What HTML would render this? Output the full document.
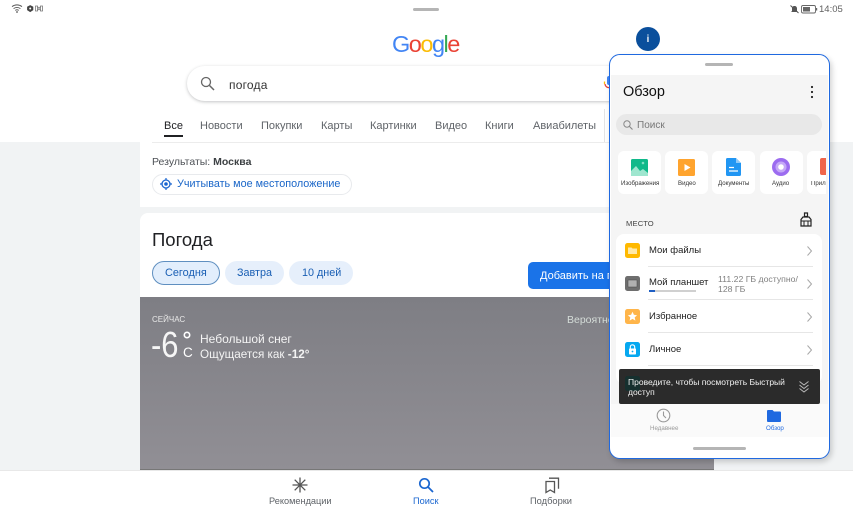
<!DOCTYPE html>
<html><head><meta charset="utf-8">
<style>
html,body{margin:0;padding:0;background:#fff}
#r{position:relative;width:853px;height:512px;overflow:hidden;background:#fff;font-family:"Liberation Sans",sans-serif;color:#3c4043}
.a{position:absolute}
.t{position:absolute;white-space:nowrap;line-height:1}
svg{position:absolute;overflow:visible}
.tile{position:absolute;top:151px;width:43px;height:43px;background:#fff;border-radius:6px}
.lbl{position:absolute;top:181px;font-size:6.1px;color:#333;white-space:nowrap;line-height:1}
.chev{fill:none;stroke:#a8a8a8;stroke-width:1}
.sep{position:absolute;left:648px;width:165px;height:1px;background:#e6e6e6}
.it{position:absolute;left:649px;font-size:9.5px;color:#222;line-height:1;white-space:nowrap}
.tab{position:absolute;top:120.5px;font-size:11px;color:#5f6368;line-height:1;white-space:nowrap}
</style></head><body><div id="r">

<div class="a" style="left:0;top:142px;width:853px;height:328px;background:#f1f3f4"></div>
<div class="a" style="left:140px;top:142px;width:574px;height:65px;background:#fff"></div>
<div class="a" style="left:140px;top:213px;width:574px;height:257px;background:#fff;border-radius:8px 8px 0 0"></div>

<!-- status bar -->
<svg style="left:12px;top:4px" width="34" height="10" viewBox="0 0 34 10">
<path d="M0 2.600C3 .3 7 .3 10 2.600M1.600 4.600C3.600 3 6.400 3 8.400 4.600M3.200 6.400C4.300 5.600 5.700 5.600 6.800 6.400" fill="none" stroke="#555" stroke-width=".9"/><circle cx="5" cy="8" r=".9" fill="#555"/>
<path d="M16 2.200l2.200-1.100 2.200 1.100.9.5v3.400l-3.100 2-3.100-2V2.700z" fill="#444"/><circle cx="18.200" cy="4.500" r="1" fill="#fff"/>
<path d="M23.500 2h2v5h-2zM30.500 2h-2v5h2zM25.500 2.500l3 4M28.500 2.500l-3 4" fill="none" stroke="#777" stroke-width=".8"/>
</svg>
<div class="a" style="left:413px;top:8px;width:26px;height:3px;border-radius:2px;background:#b5b5b5"></div>
<svg style="left:789px;top:4px" width="28" height="11" viewBox="0 0 28 11">
<path d="M2 8l1-1V4.500C3 3 4 2 5.500 2S8 3 8 4.500V7l1 1z" fill="#555"/><path d="M1.500 1.500l8 7.500" stroke="#555" stroke-width="1"/>
<rect x="12.500" y="1.500" width="14" height="7.500" rx="1.500" fill="none" stroke="#666" stroke-width=".9"/><rect x="14" y="3" width="7" height="4.500" fill="#666"/><rect x="27" y="4" width="1.200" height="2.500" fill="#666"/>
</svg>
<div class="t" style="left:819px;top:4.500px;font-size:9.500px;color:#5f5f5f">14:05</div>

<!-- Google logo -->
<div class="t" style="left:392px;top:33px;font-size:23.500px;letter-spacing:-1.500px;font-weight:400"><span style="color:#4285f4">G</span><span style="color:#ea4335">o</span><span style="color:#fbbc05">o</span><span style="color:#4285f4">g</span><span style="color:#34a853">l</span><span style="color:#ea4335">e</span></div>

<!-- search -->
<div class="a" style="left:187px;top:66px;width:480px;height:35px;border-radius:18px;background:#fff;box-shadow:0 1px 3px rgba(60,64,67,.3)"></div>
<svg style="left:200px;top:76px" width="16" height="16" viewBox="0 0 16 16"><circle cx="6" cy="6" r="4.500" fill="none" stroke="#666" stroke-width="1.300"/><path d="M9.500 9.500l4.500 4.500" stroke="#666" stroke-width="1.500"/></svg>
<div class="t" style="left:229px;top:78.500px;font-size:12px;letter-spacing:.2px;color:#333">погода</div>

<!-- tabs -->
<div class="tab" style="left:164px;color:#202124">Все</div>
<div class="a" style="left:164px;top:135px;width:19px;height:1.500px;background:#202124"></div>
<div class="tab" style="left:200px">Новости</div>
<div class="tab" style="left:261px">Покупки</div>
<div class="tab" style="left:321px">Карты</div>
<div class="tab" style="left:370px">Картинки</div>
<div class="tab" style="left:435px">Видео</div>
<div class="tab" style="left:485px">Книги</div>
<div class="tab" style="left:533px">Авиабилеты</div>
<div class="a" style="left:604px;top:109px;width:1px;height:33px;background:#e3e3e3"></div>
<div class="a" style="left:152px;top:142px;width:460px;height:1px;background:#ececec"></div>

<div class="t" style="left:152px;top:157px;font-size:10.500px;color:#4d5156">Результаты: <b style="color:#3c4043">Москва</b></div>
<div class="a" style="left:152px;top:174px;width:198px;height:19px;border:1px solid #e8eaed;border-radius:11px"></div>
<svg style="left:159px;top:177px" width="14" height="14" viewBox="0 0 14 14"><circle cx="7" cy="7" r="4" fill="none" stroke="#1a66d0" stroke-width="1.300"/><circle cx="7" cy="7" r="1.800" fill="#1a66d0"/><path d="M7 1v2M7 11v2M1 7h2M11 7h2" stroke="#1a66d0" stroke-width="1.200"/></svg>
<div class="t" style="left:177px;top:179px;font-size:10.800px;color:#1a66c8">Учитывать мое местоположение</div>

<div class="t" style="left:152px;top:231px;font-size:18.500px;color:#202124">Погода</div>
<div class="a" style="left:152px;top:261px;width:66px;height:22px;border:1px solid #5f8fc0;border-radius:12px;background:#e2eefc"></div>
<div class="t" style="left:165px;top:268px;font-size:10.900px;color:#1a5fb4">Сегодня</div>
<div class="a" style="left:225px;top:261px;width:59px;height:24px;border-radius:12px;background:#e6effb"></div>
<div class="t" style="left:237px;top:268px;font-size:10.800px;color:#1a5fb4">Завтра</div>
<div class="a" style="left:289px;top:261px;width:64px;height:24px;border-radius:12px;background:#e6effb"></div>
<div class="t" style="left:302px;top:268px;font-size:10.800px;color:#1a5fb4">10 дней</div>
<div class="a" style="left:528px;top:262px;width:90px;height:27px;border-radius:5px;background:#1a73e8"></div>
<div class="t" style="left:540px;top:270.500px;font-size:11px;color:#fff;width:70px;overflow:hidden">Добавить на главный</div>

<!-- weather -->
<div class="a" style="left:140px;top:297px;width:574px;height:173px;background:linear-gradient(#7e7e84,#918f95)"></div>
<div class="t" style="left:152px;top:315.500px;font-size:8px;color:#e8e8e8">СЕЙЧАС</div>
<div class="t" style="left:567px;top:314.500px;font-size:10.500px;color:#d4dcd8">Вероятность</div>
<div class="t" style="left:151px;top:327px;font-size:36px;color:#f6f6f6;transform:scaleX(.86);transform-origin:0 0">-6</div>
<svg style="left:183px;top:331px" width="9" height="9" viewBox="0 0 9 9"><circle cx="4" cy="4" r="2.700" fill="none" stroke="#fff" stroke-width="1.600"/></svg>
<div class="t" style="left:183px;top:346px;font-size:13.500px;color:#fff">C</div>
<div class="t" style="left:200px;top:333px;font-size:12px;color:#f4f4f4">Небольшой снег</div>
<div class="t" style="left:200px;top:349px;font-size:11.700px;color:#f4f4f4">Ощущается как <b style="font-weight:700">-12°</b></div>

<!-- bottom nav -->
<div class="a" style="left:0;top:470px;width:853px;height:42px;background:#fff;border-top:1px solid #e8e8e8;box-sizing:border-box"></div>
<div class="a" style="left:140px;top:469px;width:574px;height:1px;background:#777"></div>
<svg style="left:292px;top:477px" width="16" height="16" viewBox="0 0 16 16"><path d="M8 .5v15M.5 8h15M2.700 2.700l10.600 10.600M13.300 2.700L2.700 13.300" stroke="#555" stroke-width="1.300"/></svg>
<div class="t" style="left:269px;top:496.500px;font-size:9.200px;color:#5f6368">Рекомендации</div>
<svg style="left:418px;top:477px" width="16" height="16" viewBox="0 0 16 16"><circle cx="6.500" cy="6.500" r="4.700" fill="none" stroke="#1a66d0" stroke-width="1.700"/><path d="M10 10l5 5" stroke="#1a66d0" stroke-width="1.800"/></svg>
<div class="t" style="left:413px;top:496.500px;font-size:9.200px;color:#1a66d0">Поиск</div>
<svg style="left:545px;top:477px" width="15" height="16" viewBox="0 0 15 16"><path d="M1 4.500h8.500v11L5.250 13 1 15.500z" fill="none" stroke="#555" stroke-width="1.300"/><path d="M4 1.200h9.500v10.500" fill="none" stroke="#555" stroke-width="1.300"/></svg>
<div class="t" style="left:530px;top:496.500px;font-size:9.300px;color:#5f6368">Подборки</div>

<!-- floating info -->
<div class="a" style="left:636px;top:27px;width:24px;height:24px;border-radius:50%;background:#0a4f9c"></div>
<div class="t" style="left:646.500px;top:34px;font-size:10.500px;font-weight:700;color:#dfe8f2">i</div>

<!-- google mic peek -->
<svg style="left:603px;top:75px" width="8" height="16" viewBox="0 0 8 16"><path d="M2 9a4 4 0 0 0 5 3.500" fill="none" stroke="#ea4335" stroke-width="1.300"/><path d="M1.500 6.500V9" fill="none" stroke="#fbbc05" stroke-width="1.300"/><rect x="4" y="1" width="4" height="9" rx="2" fill="#4285f4"/></svg>

<!-- panel -->
<div class="a" style="left:609px;top:54px;width:221px;height:405px;box-sizing:border-box;border:1.500px solid #1f69e0;border-radius:11px;background:#fff;box-shadow:2px 3px 6px rgba(0,0,0,.18)"></div>
<div class="a" style="left:611px;top:75px;width:217px;height:362px;background:#f5f5f5"></div>
<div class="a" style="left:611px;top:404px;width:217px;height:33px;background:#fafafa"></div>
<div class="a" style="left:705px;top:63px;width:28px;height:3px;border-radius:2px;background:#b5b5b5"></div>
<div class="t" style="left:623px;top:85px;font-size:14.500px;color:#111">Обзор</div>
<svg style="left:810px;top:84.500px" width="4" height="14" viewBox="0 0 4 14"><circle cx="2" cy="2" r="1.100" fill="#222"/><circle cx="2" cy="7" r="1.100" fill="#222"/><circle cx="2" cy="12" r="1.100" fill="#222"/></svg>

<div class="a" style="left:616px;top:114px;width:206px;height:21px;border-radius:11px;background:#e8e8e8"></div>
<svg style="left:623px;top:120px" width="10" height="10" viewBox="0 0 10 10"><circle cx="4" cy="4" r="3.200" fill="none" stroke="#888" stroke-width="1"/><path d="M6.400 6.400L9.500 9.500" stroke="#888" stroke-width="1.100"/></svg>
<div class="t" style="left:637px;top:120.500px;font-size:10px;color:#777">Поиск</div>

<!-- tiles -->
<div class="tile" style="left:618px"></div>
<div class="tile" style="left:665px"></div>
<div class="tile" style="left:712px"></div>
<div class="tile" style="left:760px"></div>
<div class="a" style="left:807px;top:151px;width:18.500px;height:43px;background:#fff;border-radius:6px 0 0 6px"></div>
<svg style="left:631px;top:159px" width="17" height="17" viewBox="0 0 17 17"><rect width="17" height="17" rx="1.500" fill="#10b98a"/><path d="M0 17V12L5 7l4 5 3-2 5 4v3z" fill="#9fe6cf"/><circle cx="12" cy="4" r="1.300" fill="#7fe0c4"/></svg>
<svg style="left:678px;top:159px" width="17" height="17" viewBox="0 0 17 17"><rect width="17" height="17" rx="1.500" fill="#ffa42e"/><path d="M6.500 5l6 3.500-6 3.500z" fill="#fff"/></svg>
<svg style="left:726px;top:158px" width="15" height="18" viewBox="0 0 15 18"><path d="M1.500 0H10l5 5v11.500A1.500 1.500 0 0 1 13.500 18h-12A1.500 1.500 0 0 1 0 16.500v-15A1.500 1.500 0 0 1 1.500 0z" fill="#2196f3"/><path d="M10 0l5 5h-5z" fill="#90caf9"/><path d="M3 9.500h5M3 13h9" stroke="#fff" stroke-width="1.200"/></svg>
<svg style="left:772px;top:158px" width="18" height="18" viewBox="0 0 18 18"><circle cx="9" cy="9" r="9" fill="#9c6cf0"/><circle cx="9" cy="9" r="5.500" fill="#c5a8f7"/><circle cx="9" cy="9" r="2.800" fill="#fff"/></svg>
<div class="a" style="left:820px;top:158px;width:5.500px;height:17px;background:#f0654a;border-radius:2px 0 0 2px"></div>
<div class="lbl" style="left:621px">Изображения</div>
<div class="lbl" style="left:678px">Видео</div>
<div class="lbl" style="left:718px">Документы</div>
<div class="lbl" style="left:772px">Аудио</div>
<div class="a" style="left:811px;top:181px;width:14.500px;overflow:hidden;font-size:6.100px;color:#333;line-height:1;white-space:nowrap">Прил</div>

<div class="t" style="left:626px;top:219.500px;font-size:7.600px;color:#444;letter-spacing:.2px">МЕСТО</div>
<svg style="left:800px;top:212px" width="12" height="15" viewBox="0 0 12 15"><path d="M4.500 1h3v3.500h-3zM3 5h6l2 2.500V14H1V7.500z" fill="none" stroke="#222" stroke-width="1.200"/><path d="M1 9h10M4 9v5M8 9v5" stroke="#222" stroke-width="1"/></svg>

<!-- list -->
<div class="a" style="left:616px;top:234px;width:206px;height:150px;background:#fff;border-radius:8px"></div>
<svg style="left:625px;top:243px" width="15" height="15" viewBox="0 0 15 15"><rect width="15" height="15" rx="2.500" fill="#ffb900"/><path d="M3 4.500h3.500l1 1H12V11H3z" fill="#ffe9a8"/></svg>
<div class="it" style="top:246px">Мои файлы</div>
<svg style="left:807px;top:245.500px" width="5" height="10" viewBox="0 0 5 10"><path class="chev" d="M.5.500l4 4.500-4 4.500"/></svg>
<div class="sep" style="top:266px"></div>
<svg style="left:625px;top:276px" width="15" height="15" viewBox="0 0 15 15"><rect width="15" height="15" rx="2.500" fill="#6e6e6e"/><rect x="3" y="4" width="9" height="7" rx=".5" fill="#b0b0b0" stroke="#444" stroke-width=".5"/></svg>
<div class="it" style="top:277.500px">Мой планшет</div>
<div class="a" style="left:649px;top:290px;width:47px;height:1.500px;background:#d0d0d0"></div>
<div class="a" style="left:649px;top:290px;width:6px;height:1.500px;background:#1f5fc4"></div>
<div class="t" style="left:718px;top:275px;font-size:8.700px;color:#808080">111.22 ГБ доступно/</div>
<div class="t" style="left:718px;top:284.500px;font-size:8.700px;color:#808080">128 ГБ</div>
<svg style="left:807px;top:278.500px" width="5" height="10" viewBox="0 0 5 10"><path class="chev" d="M.5.500l4 4.500-4 4.500"/></svg>
<div class="sep" style="top:299px"></div>
<svg style="left:625px;top:309px" width="15" height="15" viewBox="0 0 15 15"><rect width="15" height="15" rx="2.500" fill="#ffb54a"/><path d="M7.500 2.800l1.400 3 3.200.4-2.400 2.200.7 3.200-2.900-1.700-2.900 1.700.7-3.200L2.900 6.200l3.200-.4z" fill="#fff"/></svg>
<div class="it" style="top:312px">Избранное</div>
<svg style="left:807px;top:311.500px" width="5" height="10" viewBox="0 0 5 10"><path class="chev" d="M.5.500l4 4.500-4 4.500"/></svg>
<div class="sep" style="top:332px"></div>
<svg style="left:625px;top:342px" width="15" height="15" viewBox="0 0 15 15"><rect width="15" height="15" rx="2.500" fill="#06a8f0"/><rect x="4" y="6.500" width="7" height="6" rx=".7" fill="#fff"/><path d="M5.300 6.500V5a2.200 2.200 0 0 1 4.400 0v1.500" fill="none" stroke="#fff" stroke-width="1.100"/><circle cx="7.500" cy="9.500" r=".9" fill="#06a8f0"/></svg>
<div class="it" style="top:345px">Личное</div>
<svg style="left:807px;top:344.500px" width="5" height="10" viewBox="0 0 5 10"><path class="chev" d="M.5.500l4 4.500-4 4.500"/></svg>
<div class="sep" style="top:365px"></div>

<!-- toast -->
<div class="a" style="left:619px;top:369px;width:201px;height:35px;background:#2b2b2b;border-radius:2px"></div>
<div class="a" style="left:625px;top:376px;width:15px;height:15px;background:#16302f;border-radius:2.500px"></div>
<div class="t" style="left:628px;top:378px;font-size:8.500px;color:#f2f2f2">Проведите, чтобы посмотреть Быстрый</div>
<div class="t" style="left:628px;top:388px;font-size:8.500px;color:#f2f2f2">доступ</div>
<svg style="left:799px;top:381px" width="10" height="12" viewBox="0 0 10 12"><path d="M.5.500l4.500 3.500L9.500.500M.5 4l4.500 3.500L9.500 4M.5 7.500l4.500 3.500 4.500-3.500" fill="none" stroke="#bbb" stroke-width=".9"/></svg>

<!-- panel tab bar -->
<svg style="left:656px;top:408px" width="15" height="15" viewBox="0 0 15 15"><circle cx="7.500" cy="7.500" r="6.300" fill="none" stroke="#999" stroke-width="1.100"/><path d="M7.500 3.500v4l2.500 2.500" fill="none" stroke="#999" stroke-width="1.100"/></svg>
<div class="t" style="left:650px;top:426px;font-size:6.200px;color:#999">Недавнее</div>
<svg style="left:767px;top:410px" width="14" height="12" viewBox="0 0 14 12"><path d="M1 0h4.500l1.500 1.500h6a1 1 0 0 1 1 1V11a1 1 0 0 1-1 1H1a1 1 0 0 1-1-1V1a1 1 0 0 1 1-1z" fill="#1f69e0"/></svg>
<div class="t" style="left:766px;top:426px;font-size:6.200px;color:#1f69e0">Обзор</div>
<div class="a" style="left:693px;top:447px;width:53px;height:3px;border-radius:2px;background:#b5b5b5"></div>

</div></body></html>
